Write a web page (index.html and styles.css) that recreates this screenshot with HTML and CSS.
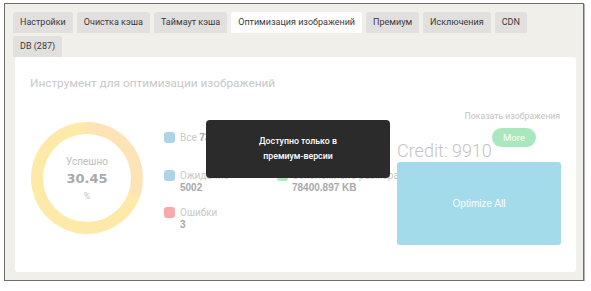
FILE: index.html
```html
<!DOCTYPE html>
<html lang="ru">
<head>
<meta charset="utf-8">
<link rel="stylesheet" href="styles.css">
</head>
<body>
<div class="frame">
  <nav class="tabs">
    <span class="tab">Настройки</span>
    <span class="tab">Очистка кэша</span>
    <span class="tab">Таймаут кэша</span>
    <span class="tab active">Оптимизация изображений</span>
    <span class="tab">Премиум</span>
    <span class="tab">Исключения</span>
    <span class="tab">CDN</span>
    <span class="tab">DB (287)</span>
  </nav>
  <section class="panel">
    <h2 class="title">Инструмент для оптимизации изображений</h2>
    <div class="main">
      <div class="donut">
        <div class="donut-hole">
          <span class="donut-label">Успешно</span>
          <span class="donut-value">30.45</span>
          <span class="donut-unit">%</span>
        </div>
      </div>
      <div class="legend">
        <div class="item">
          <span class="dot blue"></span>
          <div class="item-text"><span class="label">Все</span> <b class="value">7342</b></div>
        </div>
        <div class="item item-2"></div>
        <div class="item">
          <span class="dot blue"></span>
          <div class="item-text stacked"><span class="label">Ожидание</span><b class="value">5002</b></div>
        </div>
        <div class="item item-2">
          <span class="dot green"></span>
          <div class="item-text stacked"><span class="label">Сэкономлено размера</span><b class="value">78400.897 KB</b></div>
        </div>
        <div class="item">
          <span class="dot red"></span>
          <div class="item-text stacked"><span class="label">Ошибки</span><b class="value">3</b></div>
        </div>
      </div>
      <div class="side">
        <div class="show-link">Показать изображения</div>
        <div class="credit-row">
          <span class="credit">Credit: 9910</span>
          <span class="more">More</span>
        </div>
        <div class="optimize">Optimize All</div>
      </div>
    </div>
    <div class="tooltip">Доступно только в<br>премиум-версии</div>
  </section>
</div>
</body>
</html>
```
FILE: styles.css
```css
* { box-sizing: border-box; }
html, body { margin: 0; padding: 0; background: #fff; }
body { font-family: Roboto, "Open Sans", sans-serif; color: #333; }

.frame {
  margin: 3px 7px 0 4px;
  height: 278px;
  border: 1px solid #6e6e6e;
  box-shadow: 1px 1px 0 #b5b5b5;
  background: #f1efe9;
  padding: 8px 7px 9px 8px;
}

.tabs {
  display: flex;
  flex-wrap: wrap;
  column-gap: 4px;
  row-gap: 3px;
  width: 535px;
}
.tab {
  height: 21px;
  line-height: 21px;
  padding: 0 7px;
  font-size: 9px;
  color: #3a3a3a;
  background: #e1e0de;
  border-radius: 3px 3px 0 0;
  white-space: nowrap;
}
.tab.active { background: #fff; }

.panel {
  position: relative;
  margin-left: 2px;
  height: 215px;
  background: #fff;
  border-radius: 3px;
  padding: 17px 15px 0 15px;
}
.title {
  margin: 0;
  font-size: 11.8px;
  line-height: 18px;
  font-weight: 400;
  color: #c8c8c8;
}

.main {
  display: flex;
  align-items: flex-start;
  margin-top: 17px;
}

.donut {
  margin: 13px 0 0 1px;
  width: 112px;
  height: 112px;
  border-radius: 50%;
  background: conic-gradient(#fde3b6 0 30.45%, #fdeaa9 30.45% 100%);
  display: flex;
  align-items: center;
  justify-content: center;
  flex: none;
}
.donut-hole {
  width: 88px;
  height: 88px;
  border-radius: 50%;
  background: #fff;
  display: flex;
  flex-direction: column;
  align-items: center;
  justify-content: center;
  color: #b3b3b3;
  padding-top: 3px;
}
.donut-label { font-size: 10px; line-height: 14px; color: #bdbdbd; }
.donut-value {
  font-family: "DejaVu Sans", sans-serif;
  font-weight: 700;
  font-size: 13px;
  line-height: 19px;
  color: #aaa;
}
.donut-unit { font-size: 9px; line-height: 16px; color: #c4c4c4; }

.legend {
  margin: 23px 0 0 21px;
  display: grid;
  grid-template-columns: 113px 100px;
  grid-template-rows: 38px 37px 37px;
  flex: none;
}
.item { display: flex; align-items: flex-start; }
.dot {
  width: 11px;
  height: 11px;
  border-radius: 3px;
  margin-right: 5px;
  flex: none;
}
.item-2 .dot { margin-right: 4px; }
.dot.blue { background: #acd4e6; }
.dot.green { background: #a9e8bb; }
.dot.red { background: #f8aaaa; }
.item-text { font-size: 10px; line-height: 12px; white-space: nowrap; }
.item-text.stacked { display: flex; flex-direction: column; }
.label { color: #c9c9c9; }
.value {
  font-family: "Liberation Sans", Arial, sans-serif;
  font-weight: 700;
  font-size: 10px;
  line-height: 12px;
  color: #a9a9a9;
}

.side {
  margin: 1px 0 0 auto;
  width: 164px;
  display: flex;
  flex-direction: column;
}
.show-link {
  text-align: right;
  padding-right: 1px;
  font-size: 8.7px;
  line-height: 12px;
  color: #c3c3c3;
  margin-bottom: 6px;
}
.credit-row {
  height: 34px;
  display: flex;
  justify-content: space-between;
  padding-right: 25px;
}
.credit {
  align-self: flex-end;
  font-size: 18px;
  font-weight: 300;
  line-height: 22px;
  color: #c4c4c4;
  white-space: nowrap;
}
.more {
  align-self: flex-start;
  width: 44px;
  height: 19px;
  line-height: 19px;
  border-radius: 10px;
  background: #a9e7bd;
  color: #fff;
  font-size: 9.5px;
  text-align: center;
}
.optimize {
  height: 83px;
  border-radius: 3px;
  background: #a3dbea;
  color: #fff;
  font-family: "Liberation Sans", Arial, sans-serif;
  font-size: 10px;
  display: flex;
  align-items: center;
  justify-content: center;
}

.tooltip {
  position: absolute;
  left: 191px;
  top: 63px;
  width: 184px;
  height: 58px;
  border-radius: 4px;
  background: #2b2b2b;
  color: #fff;
  font-size: 8.8px;
  font-weight: 500;
  line-height: 15px;
  display: flex;
  align-items: center;
  justify-content: center;
  text-align: center;
}
```
